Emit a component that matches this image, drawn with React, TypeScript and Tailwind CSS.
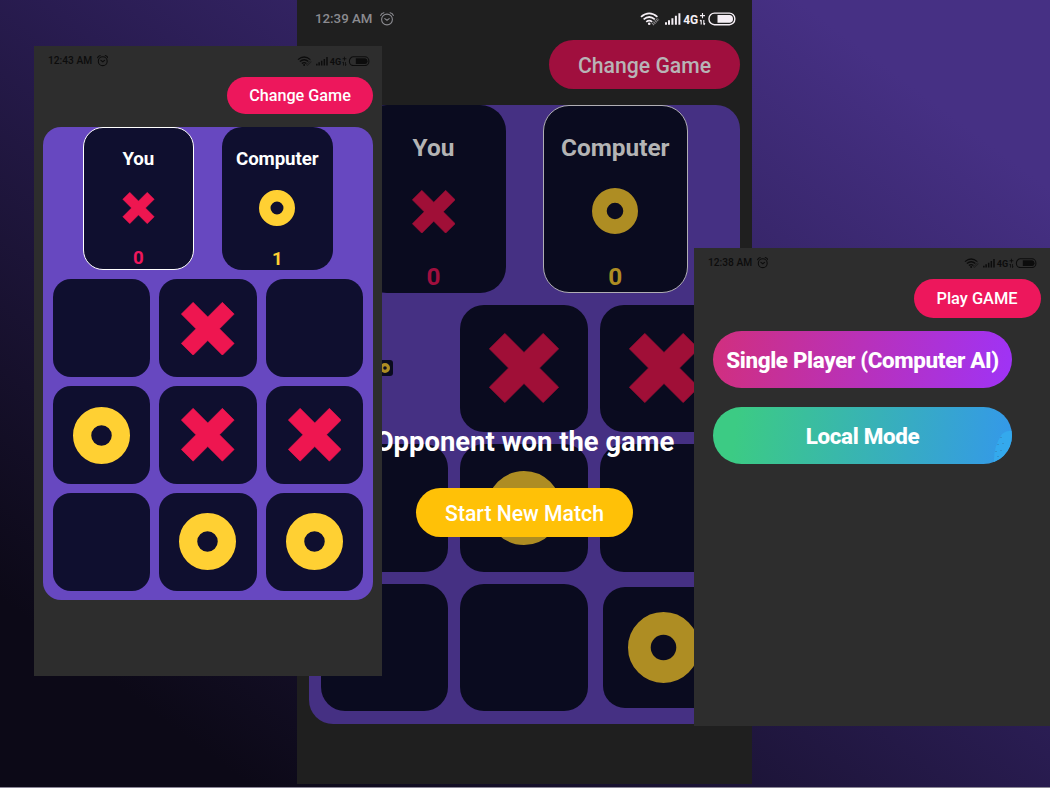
import React from "react";

type Mark = "x" | "o" | null;

function Cross({ className, color }: { className: string; color: string }) {
  return (
    <svg viewBox="0 0 53 53" className={className} fill={color} stroke={color} strokeWidth="0.6" strokeLinejoin="round">
      <path d="M12 .3 26.5 14.8 41 .3 52.7 12 38.2 26.5 52.7 41 41 52.7 26.5 38.2 12 52.7 .3 41 14.8 26.5 .3 12Z" />
    </svg>
  );
}

function Ring({ className, color }: { className: string; color: string }) {
  return (
    <svg viewBox="0 0 100 100" className={className}>
      <circle cx="50" cy="50" r="34" fill="none" stroke={color} strokeWidth="32" />
    </svg>
  );
}

function AlarmIcon({ className }: { className: string }) {
  return (
    <svg viewBox="0 0 14 14" className={className} fill="none" stroke="currentColor" strokeLinecap="round">
      <circle cx="7" cy="7.5" r="5.4" />
      <path d="M4.8 6.6 7 8.2 9.2 6.6M.7 3.4Q1.4 1.3 3.9 .7M13.3 3.4Q12.6 1.3 10.1 .7" />
    </svg>
  );
}

function StatusIcons({ className }: { className: string }) {
  return (
    <svg viewBox="0 0 96 14" className={className} fill="none" stroke="currentColor">
      <path d="M1 4.8Q9.2-2.2 17.4 4.8M3.6 7.4Q9.2 2.6 14.8 7.4M6.2 9.9Q9.2 7.5 12.2 9.9" strokeWidth="1.7" />
      <circle cx="9.2" cy="11.8" r="1.3" fill="currentColor" stroke="none" />
      <path d="M12.6 12.4 18.4 6.8" strokeWidth="3" opacity="0.5" strokeDasharray="1.2 0.7" />
      <path d="M26 10.2v2.5M29 8.2v4.5M32.4 6.2v6.5M35.9 3.8v8.9M39.4 1.2v11.5" strokeWidth="2" />
      <text x="43.2" y="11.8" fill="currentColor" stroke="none" fontFamily="Roboto, sans-serif" fontWeight="700" fontSize="12.6" textLength="15" lengthAdjust="spacingAndGlyphs">4G</text>
      <path d="M60 3.6h5M62.5 1v5.2M61.2 8v4.6M60 9.2l1.2-1.4M63.8 8v4.6M65 11.4l-1.2 1.4" strokeWidth="1.1" />
      <rect x="69" y="1.1" width="25.8" height="11.6" rx="5.4" strokeWidth="1.4" />
      <path d="M77.5 3.1H90Q93 3.8 93 6.9T90 10.7H77.5Z" fill="currentColor" stroke="none" />
    </svg>
  );
}

function SmallStatus({ time, className }: { time: string; className: string }) {
  return (
    <div className={"flex items-center h-[12px] text-[#0c0c0c] " + className}>
      <span className="text-[10.2px] leading-[12px] font-medium">{time}</span>
      <AlarmIcon className="w-[11.5px] h-[11.5px] ml-[4.5px] stroke-[1.3]" />
      <StatusIcons className="w-[73px] h-[10.6px] ml-auto" />
    </div>
  );
}

function Cell({ mark }: { mark: Mark }) {
  return (
    <div className="flex items-center justify-center rounded-[18px] bg-[#0f0f2f]">
      {mark === "x" && <Cross className="w-[53.5px] h-[53.5px]" color="#ee1650" />}
      {mark === "o" && <Ring className="w-[57px] h-[57px]" color="#ffd033" />}
    </div>
  );
}

function FrontGame() {
  const board: Mark[] = [null, "x", null, "o", "x", "x", null, "o", "o"];
  return (
    <section className="absolute left-[34px] top-[46px] w-[348px] h-[630px] bg-[#2d2d2d] flex flex-col">
      <SmallStatus time="12:43 AM" className="mt-[9px] ml-[14px] mr-[12px]" />
      <button className="self-end mr-[9px] mt-[10px] w-[146px] h-[37px] pt-[2px] rounded-full bg-[#ed175c] text-white text-[16.2px] font-medium">Change Game</button>
      <div className="ml-[9px] mt-[13px] w-[330px] h-[473px] rounded-[18px] bg-[#6748c0] flex flex-col">
        <div className="flex ml-[39.5px] gap-[27.5px]">
          <div className="w-[111.5px] h-[143px] rounded-[20px] bg-[#0f0f2f] border-[1.5px] border-white flex flex-col items-center text-white pt-[20px]">
            <span className="text-[18.7px] leading-[22px] font-bold tracking-[-0.1px]">You</span>
            <Cross className="w-[33px] h-[33px] mt-[22px]" color="#ee1650" />
            <span className="text-[18.7px] leading-[22px] font-bold text-[#ed175c] mt-[23px]">0</span>
          </div>
          <div className="w-[111.5px] h-[143px] rounded-[20px] bg-[#0f0f2f] flex flex-col items-center text-white pt-[21px]">
            <span className="text-[18.7px] leading-[22px] font-bold tracking-[-0.1px]">Computer</span>
            <Ring className="w-[36px] h-[36px] mt-[20px]" color="#ffd033" />
            <span className="text-[18.7px] leading-[22px] font-bold text-[#ffd033] mt-[22px]">1</span>
          </div>
        </div>
        <div className="grid grid-cols-3 grid-rows-3 gap-[9px] w-[311px] h-[311.5px] ml-[9.5px] mt-[9.4px]">
          {board.map((m, i) => <Cell key={i} mark={m} />)}
        </div>
      </div>
    </section>
  );
}

function BackGame() {
  const tile = "w-[127.5px] h-[127.5px] rounded-[24px] bg-[#0a0b1f] flex items-center justify-center";
  return (
    <section className="absolute left-[297px] top-0 w-[455px] h-[784px] bg-[#1f1f1f] flex flex-col">
      <div className="flex items-center h-[16px] mt-[11px] ml-[18px] mr-[16px]">
        <span className="text-[13.3px] leading-[16px] font-medium text-[#8b8b90]">12:39 AM</span>
        <AlarmIcon className="w-[14px] h-[14px] ml-[7px] text-[#8b8b90] stroke-[1.1]" />
        <StatusIcons className="w-[96px] h-[14px] ml-auto text-[#f5eff5]" />
      </div>
      <button className="self-end mr-[12px] mt-[13px] w-[191px] h-[49px] pt-[2px] rounded-full bg-[#a00f3e] text-[#b8b4b6] text-[21.2px] font-medium">Change Game</button>
      <div className="ml-[12px] mt-[16px] w-[431px] h-[619px] rounded-[24px] bg-[#453083] flex flex-col">
        <div className="flex ml-[52px] gap-[36.5px]">
          <div className="w-[145px] h-[188px] rounded-[26px] bg-[#0a0b1f] flex flex-col items-center pt-[29px]">
            <span className="text-[24.4px] leading-[28px] font-bold text-[#b4b4b4]">You</span>
            <Cross className="w-[43.5px] h-[43.5px] mt-[27.5px]" color="#a00f37" />
            <span className="text-[24.4px] leading-[28px] font-bold text-[#a00f3e] mt-[30px]">0</span>
          </div>
          <div className="w-[145.5px] h-[188px] rounded-[26px] bg-[#0a0b1f] border-[1.5px] border-[#b0aeb4] flex flex-col items-center pt-[28px]">
            <span className="text-[24.4px] leading-[28px] font-bold text-[#b4b4b4]">Computer</span>
            <Ring className="w-[46px] h-[46px] mt-[26px]" color="#ae8d23" />
            <span className="text-[24.4px] leading-[28px] font-bold text-[#ae8d23] mt-[29px]">0</span>
          </div>
        </div>
        <div className="grid grid-cols-[repeat(3,127.5px)] grid-rows-[repeat(3,127.5px)] gap-[12px] ml-[11.9px] mt-[11.6px] place-items-center">
          <div className="w-[16px] h-[16px] rounded-[3px] bg-[#0a0b1f] flex items-center justify-center">
            <Ring className="w-[10px] h-[10px]" color="#ae8d23" />
          </div>
          <div className={tile}><Cross className="w-[70px] h-[70px]" color="#a00f37" /></div>
          <div className={tile}><Cross className="w-[70px] h-[70px]" color="#a00f37" /></div>
          <div className={tile} />
          <div className={tile}><Ring className="w-[74px] h-[74px]" color="#ae8d23" /></div>
          <div className={tile} />
          <div className={tile} />
          <div className={tile} />
          <div className="w-[121px] h-[121px] rounded-[22px] bg-[#0a0b1f] flex items-center justify-center">
            <Ring className="w-[71px] h-[71px]" color="#ae8d23" />
          </div>
        </div>
      </div>
      <div className="absolute inset-x-0 top-[426px] flex flex-col items-center">
        <p className="text-[27.4px] leading-[32px] font-bold text-white whitespace-nowrap">Opponent won the game</p>
        <button className="mt-[30px] w-[217px] h-[49px] pt-[2px] rounded-full bg-[#ffc107] text-white text-[21.2px] font-medium">Start New Match</button>
      </div>
    </section>
  );
}

function ModeMenu() {
  return (
    <section className="absolute left-[694px] top-[248px] w-[356px] h-[478px] bg-[#2d2d2d] flex flex-col">
      <SmallStatus time="12:38 AM" className="mt-[9px] ml-[14px] mr-[13px]" />
      <button className="self-end mr-[9.5px] mt-[10px] w-[127px] h-[39px] pt-[2px] rounded-full bg-[#ed175c] text-white text-[16.4px] font-medium">Play GAME</button>
      <button className="ml-[19px] mt-[13px] w-[299px] h-[57px] pt-[2px] rounded-full bg-linear-[97deg,#d12f7e,#9f33f6] text-white text-[22.4px] tracking-[-0.34px] font-extrabold whitespace-nowrap">Single Player (Computer AI)</button>
      <button className="relative overflow-hidden ml-[19px] mt-[19px] w-[299px] h-[57px] pt-[2px] rounded-full bg-linear-[97deg,#3ccb84_8%,#3498ea] text-white text-[22.4px] tracking-[-0.34px] font-extrabold">
        <svg viewBox="0 0 20 34" className="absolute right-0 bottom-0 w-[20px] h-[34px]">
          <path d="M20 1Q15 0 10 4Q1 17 2 34H20Z" fill="#34a9ed" />
          <path d="M9 7v1M6 14v1M11 13v1M4 21v1M9 20v1M6 26v1" stroke="#347faf" strokeWidth="1" />
        </svg>
        <span className="relative">Local Mode</span>
      </button>
    </section>
  );
}

export default function App() {
  return (
    <main className="w-[1050px] h-[788px] flex flex-col bg-[#8a8696] font-['Roboto',sans-serif]">
      <div className="relative overflow-hidden h-[787px] bg-linear-to-tr from-[#0c0917] from-12% via-[#291c51] via-52% to-[#463084] to-88%">
        <BackGame />
        <FrontGame />
        <ModeMenu />
      </div>
    </main>
  );
}
